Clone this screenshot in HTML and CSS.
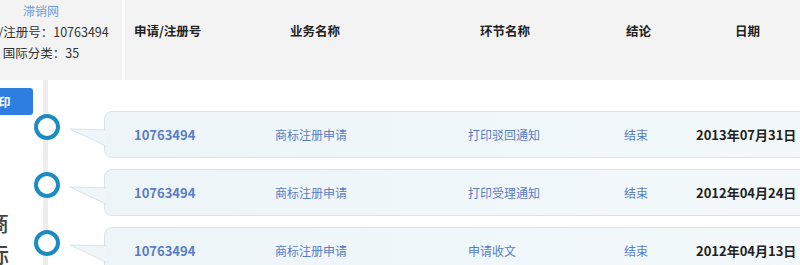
FILE: index.html
```html
<!DOCTYPE html>
<html lang="zh-CN">
<head>
<meta charset="utf-8">
<title>商标流程</title>
<link rel="stylesheet" href="styles.css">
</head>
<body>
<div class="page">
  <div class="top">
    <div class="info">
      <div class="site">滞销网</div>
      <div class="line">申请/注册号：10763494</div>
      <div class="line">国际分类：35</div>
    </div>
    <div class="divider"></div>
    <div class="head">
      <div class="h c1">申请/注册号</div>
      <div class="h c2">业务名称</div>
      <div class="h c3">环节名称</div>
      <div class="h c4">结论</div>
      <div class="h c5">日期</div>
    </div>
  </div>
  <div class="main">
    <div class="side">
      <div class="btn">打印</div>
      <div class="big">商<br>标<br>流</div>
    </div>
    <div class="timeline">
      <div class="row">
        <div class="dot"></div>
        <svg class="ptr" width="36" height="20" viewBox="0 0 36 20"><polygon points="0,1 36,2 36,18" fill="#eef6fa"/><polyline points="36,2 0,1 36,18" fill="none" stroke="#d9e3e8" stroke-width="1"/></svg>
        <div class="card">
          <div class="num">10763494</div>
          <div class="biz">商标注册申请</div>
          <div class="step">打印驳回通知</div>
          <div class="res">结束</div>
          <div class="date">2013年07月31日</div>
        </div>
      </div>
      <div class="row">
        <div class="dot"></div>
        <svg class="ptr" width="36" height="20" viewBox="0 0 36 20"><polygon points="0,1 36,2 36,18" fill="#eef6fa"/><polyline points="36,2 0,1 36,18" fill="none" stroke="#d9e3e8" stroke-width="1"/></svg>
        <div class="card">
          <div class="num">10763494</div>
          <div class="biz">商标注册申请</div>
          <div class="step">打印受理通知</div>
          <div class="res">结束</div>
          <div class="date">2012年04月24日</div>
        </div>
      </div>
      <div class="row">
        <div class="dot"></div>
        <svg class="ptr" width="36" height="20" viewBox="0 0 36 20"><polygon points="0,1 36,2 36,18" fill="#eef6fa"/><polyline points="36,2 0,1 36,18" fill="none" stroke="#d9e3e8" stroke-width="1"/></svg>
        <div class="card">
          <div class="num">10763494</div>
          <div class="biz">商标注册申请</div>
          <div class="step">申请收文</div>
          <div class="res">结束</div>
          <div class="date">2012年04月13日</div>
        </div>
      </div>
    </div>
  </div>
</div>
</body>
</html>
```
FILE: styles.css
```css
html, body {
  margin: 0;
  padding: 0;
  overflow: hidden;
  background: #ffffff;
}
body {
  width: 800px;
  height: 265px;
  font-family: "Noto Sans CJK SC", "Noto Sans", sans-serif;
  color: #333;
}
.page {
  width: 800px;
  height: 265px;
  overflow: hidden;
}
.top {
  display: flex;
  height: 80px;
  background: #f3f3f4;
}
.info {
  flex: none;
  width: 162px;
  margin-left: -40px;
  text-align: center;
}
.site {
  font-size: 12px;
  line-height: 21px;
  color: #6f9be0;
}
.line {
  font-size: 12.5px;
  line-height: 21px;
  color: #333;
  white-space: nowrap;
}
.divider {
  flex: none;
  width: 3px;
  background: #ffffff;
}
.head {
  display: flex;
  padding-left: 9px;
  padding-top: 21px;
  font-size: 12.5px;
  font-weight: bold;
  color: #222;
  line-height: 20px;
}
.h { white-space: nowrap; }
.head .c1 { width: 156px; }
.head .c2 { width: 190px; }
.head .c3 { width: 146px; }
.head .c4 { width: 109px; }
.main {
  display: flex;
  height: 185px;
}
.side {
  flex: none;
  width: 69px;
  margin-left: -36px;
  padding-top: 8px;
}
.btn {
  height: 27px;
  background: #2d7ee0;
  border-radius: 3px;
  color: #fff;
  font-size: 12px;
  font-weight: bold;
  line-height: 27px;
  text-align: center;
}
.big {
  margin-top: 90px;
  padding-left: 23px;
  font-size: 22px;
  font-weight: 500;
  line-height: 32px;
  color: #444;
}
.timeline {
  flex: 1;
  padding-top: 31px;
  background: linear-gradient(#ededed, #ededed) no-repeat 10px 0 / 5px 100%;
}
.row {
  display: flex;
  align-items: flex-start;
  height: 47px;
  margin-bottom: 11px;
}
.dot {
  flex: none;
  width: 18px;
  height: 18px;
  margin-top: 3px;
  margin-left: 1px;
  border: 4px solid #1a8cc2;
  border-radius: 50%;
  background: #ffffff;
}
.ptr {
  flex: none;
  margin-left: 10px;
  margin-top: 17px;
  margin-right: -2px;
  z-index: 1;
}
.card {
  flex: none;
  width: 700px;
  height: 45px;
  border: 1px solid #d9e3e8;
  border-radius: 8px;
  background: linear-gradient(90deg, #edf5f9, #f3f9fb);
  display: flex;
  align-items: center;
  padding-left: 29px;
  font-size: 12px;
  color: #5a7cc6;
  white-space: nowrap;
}
.num {
  width: 141px;
  font-size: 13px;
  font-weight: bold;
}
.biz { width: 193px; }
.step { width: 156px; }
.res { width: 72px; }
.date {
  font-size: 13px;
  font-weight: bold;
  color: #222;
}
```
